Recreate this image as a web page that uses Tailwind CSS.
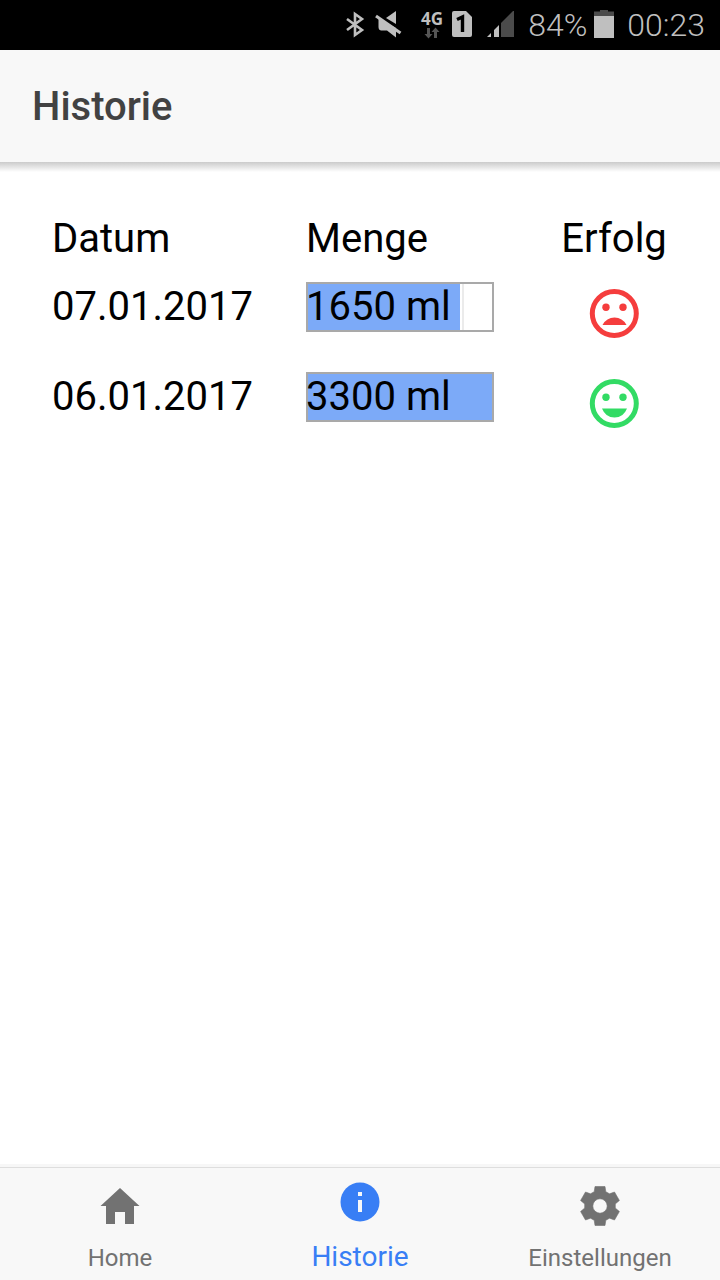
<!DOCTYPE html>
<html lang="de">
<head>
<meta charset="utf-8">
<meta name="viewport" content="width=device-width, initial-scale=1">
<title>Historie</title>
<script src="https://cdn.jsdelivr.net/npm/@tailwindcss/browser@4"></script>
</head>
<body class="flex min-h-screen flex-col bg-white font-[Roboto,sans-serif] text-black">
  <div class="flex h-[50px] items-center justify-end bg-black pr-[15px] text-[#bfbfbf]">
    <svg class="mr-[10px] h-[28px] w-[20px]" viewBox="0 0 20 28" fill="none" stroke="currentColor" stroke-width="2.6" aria-hidden="true"><path d="M2 8 L17 19 L10 24 V3 L17 8 L2 19"/></svg>
    <svg class="mr-[18px] h-[28px] w-[28px]" viewBox="0 0 28 28" fill="currentColor" aria-hidden="true"><path d="M11 7 L21 0 V13 Z"/><path d="M3.500 7 L21 17 V26.500L12 19.500 H6 Q3.500 19 3.500 16 Z"/><path d="M1 5 L25.500 22" stroke="currentColor" stroke-width="3"/></svg>
    <div class="mr-[8px] flex w-[22px] flex-col items-center pb-[2px]">
      <span class="font-['Open_Sans',sans-serif] text-[17px] leading-[17px] font-bold">4G</span>
      <svg class="h-[12px] w-[16px]" viewBox="0 0 16 12" fill="#555" aria-hidden="true"><path d="M3 1h3v6h2.500L4.500 11.500 0.500 7H3zM10 11h3V5h2.500L11.500 0.500 7.500 5H10z"/></svg>
    </div>
    <svg class="mr-[13px] h-[28px] w-[22px]" viewBox="0 0 22 28" aria-hidden="true"><path d="M3 0H15L21 6V24Q21 26 19 26H3Q1 26 1 24V2Q1 0 3 0Z" fill="#bfbfbf"/><path d="M6 8.500 L11.500 6V21" fill="none" stroke="#000" stroke-width="3.400"/></svg>
    <svg class="mr-[14px] h-[28px] w-[28px]" viewBox="0 0 28 28" aria-hidden="true"><path d="M1 26 L5 22V26ZM8 19 L13 14V26H8Z" fill="#bfbfbf"/><path d="M15 12 L28 -1V26H15Z" fill="#4b4b4b"/></svg>
    <span class="mr-[7px] text-[32px] leading-[38px] font-light">84%</span>
    <svg class="mr-[13px] h-[30px] w-[20px]" viewBox="0 0 20 30" aria-hidden="true"><path d="M6 -1.500H14V1.500H20V6H0V1.500H6Z" fill="#4b4b4b"/><path d="M0 6H20V28H0Z" fill="#bfbfbf"/></svg>
    <span class="text-[32px] leading-[38px] font-light">00:23</span>
  </div>
  <header class="flex h-[112px] items-center bg-[#f8f8f8] px-8 pt-[2px]">
    <h1 class="text-[40px] leading-[48px] font-medium text-[#424242]">Historie</h1>
  </header>
  <div class="h-[10px] bg-linear-to-b from-[#cbcbcb] to-white"></div>

  <main class="flex-1 px-[52px] pt-[42px]">
    <table class="w-full table-fixed text-left text-[40px] leading-[50px]">
      <thead>
        <tr class="h-[68px] align-top">
          <th class="w-[41.25%] font-normal" scope="col">Datum</th>
          <th class="w-[41.25%] font-normal" scope="col">Menge</th>
          <th class="text-center font-normal" scope="col">Erfolg</th>
        </tr>
      </thead>
      <tbody>
        <tr class="h-[90px] align-top">
          <td>07.01.2017</td>
          <td>
            <div class="grid w-[188px]">
              <div class="col-start-1 row-start-1 flex h-[50px] gap-[2px] border-2 border-[#a9a9a9]"><div class="bg-[#7caaf8]" style="width:82.5%"></div><div class="w-[2px] bg-[#ebebeb]"></div></div>
              <span class="col-start-1 row-start-1">1650 ml</span>
            </div>
          </td>
          <td>
            <svg class="mx-auto mt-[6px] block size-[50px]" viewBox="0 0 50 50" fill="#f53d3d" role="img" aria-label="Nicht erreicht"><circle cx="25.300" cy="25.500" r="22" fill="none" stroke="#f53d3d" stroke-width="5"/><circle cx="17" cy="19.300" r="3.700"/><circle cx="34" cy="19.300" r="3.700"/><path d="M13.500 37Q17.500 29.500 25.500 29.500T37.500 37Z"/></svg>
          </td>
        </tr>
        <tr class="h-[90px] align-top">
          <td>06.01.2017</td>
          <td>
            <div class="grid w-[188px]">
              <div class="col-start-1 row-start-1 flex h-[50px] border-2 border-[#a9a9a9]"><div class="bg-[#7caaf8]" style="width:100%"></div></div>
              <span class="col-start-1 row-start-1">3300 ml</span>
            </div>
          </td>
          <td>
            <svg class="mx-auto mt-[6px] block size-[50px]" viewBox="0 0 50 50" fill="#32db64" role="img" aria-label="Erreicht"><circle cx="25.300" cy="25.500" r="22" fill="none" stroke="#32db64" stroke-width="5"/><circle cx="17" cy="19.300" r="3.700"/><circle cx="34" cy="19.300" r="3.700"/><path d="M13 30.500H38Q34.500 39.500 25.500 39.500T13 30.500Z"/></svg>
          </td>
        </tr>
      </tbody>
    </table>
  </main>

  <div class="h-[3px] bg-[#f7f7f7]"></div>
  <nav class="grid h-[113px] grid-cols-3 border-t border-[#dedede] bg-[#f8f8f8] text-[24px] leading-[28px] text-[#727272]">
    <a href="#home" class="flex flex-col items-center gap-[18px] pt-[18px]">
      <svg class="size-[40px]" viewBox="0 0 40 40" fill="currentColor" aria-hidden="true"><path d="M20 2 L39.500 20H34V38H25V26H15V38H6V20H0.500Z"/></svg>
      Home
    </a>
    <a href="#historie" aria-current="page" class="flex flex-col items-center gap-[19px] pt-[14px] text-[28px] leading-[32px] text-[#387ef5]">
      <svg class="size-[40px]" viewBox="0 0 40 40" fill="currentColor" aria-hidden="true"><circle cx="20" cy="20" r="19.500"/><path d="M18 10H22V14H18ZM18 18H22V30H18Z" fill="#f8f8f8"/></svg>
      Historie
    </a>
    <a href="#einstellungen" class="flex flex-col items-center gap-[18px] pt-[18px]">
      <svg class="size-[40px]" viewBox="0 0 40 40" fill="currentColor" stroke="currentColor" stroke-width="0.600" stroke-linejoin="round" fill-rule="evenodd" aria-hidden="true"><path d="M14.200 5.700L15 .5H25L25.800 5.700L29.500 7.800L34.500 6L39.400 14.500L35.300 17.900V22.100L39.400 25.500L34.500 34L29.500 32.200L25.800 34.300L25 39.500H15L14.200 34.300L10.500 32.200L5.500 34L.6 25.500L4.700 22.100V17.900L.6 14.500L5.500 6L10.500 7.800ZM20 12.800A7.200 7.200 0 1 0 20 27.200A7.200 7.200 0 1 0 20 12.800Z"/></svg>
      Einstellungen
    </a>
  </nav>
</body>
</html>
